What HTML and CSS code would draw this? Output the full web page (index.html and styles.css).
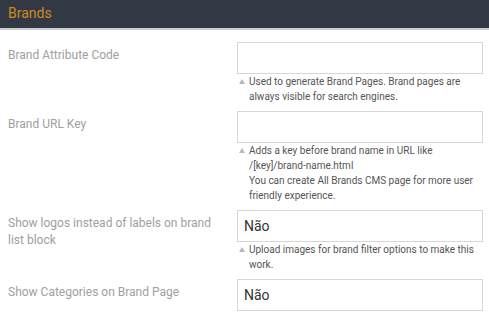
FILE: index.html
```html
<!DOCTYPE html>
<html lang="pt">
<head>
    <meta charset="UTF-8">
    <title>Brands</title>
    <link rel="stylesheet" href="styles.css">
</head>
<body>

<div class="section-head">Brands</div>

<div class="config">
    <div class="row">
        <label class="label">Brand Attribute Code</label>
        <div class="value">
            <input class="field" type="text">
            <p class="note">Used to generate Brand Pages. Brand pages are always visible for search engines.</p>
        </div>
    </div>

    <div class="row">
        <label class="label">Brand URL Key</label>
        <div class="value">
            <input class="field" type="text">
            <p class="note">Adds a key before brand name in URL like /[key]/brand-name.html<br>You can create All Brands CMS page for more user friendly experience.</p>
        </div>
    </div>

    <div class="row">
        <label class="label">Show logos instead of labels on brand list block</label>
        <div class="value">
            <div class="field select">Não</div>
            <p class="note">Upload images for brand filter options to make this work.</p>
        </div>
    </div>

    <div class="row">
        <label class="label">Show Categories on Brand Page</label>
        <div class="value">
            <div class="field select">Não</div>
        </div>
    </div>
</div>

</body>
</html>
```

FILE: styles.css
```css
body {
    margin: 0;
    font-family: Roboto, "Liberation Sans", sans-serif;
    background-color: #fff;
}

.section-head {
    background-color: #323944;
    color: #d08a22;
    font-size: 14px;
    height: 28px;
    line-height: 26px;
    padding-left: 8px;
    border-bottom: 2px solid #c9ccd1;
}

.config {
    padding-top: 12px;
}

.row {
    display: grid;
    grid-template-columns: 229px 246px;
    padding-left: 8px;
    margin-bottom: 7px;
}

.label {
    color: #a0a0a0;
    font-size: 12px;
    line-height: 17px;
    padding-top: 5px;
    padding-right: 8px;
}

.field {
    display: block;
    box-sizing: border-box;
    width: 246px;
    height: 32px;
    margin: 0;
    border: 1px solid #d6d6d6;
    background: #fff;
    font-family: inherit;
    font-size: 14px;
    color: #333;
    padding: 0 6px;
}

.select {
    line-height: 30px;
}

.note {
    position: relative;
    margin: 0;
    padding-left: 12px;
    font-size: 10px;
    line-height: 15px;
    color: #555;
}

.note::before {
    content: "";
    position: absolute;
    left: 2px;
    top: 5px;
    border-left: 3px solid transparent;
    border-right: 3px solid transparent;
    border-bottom: 5px solid #b4b9bf;
}
```
